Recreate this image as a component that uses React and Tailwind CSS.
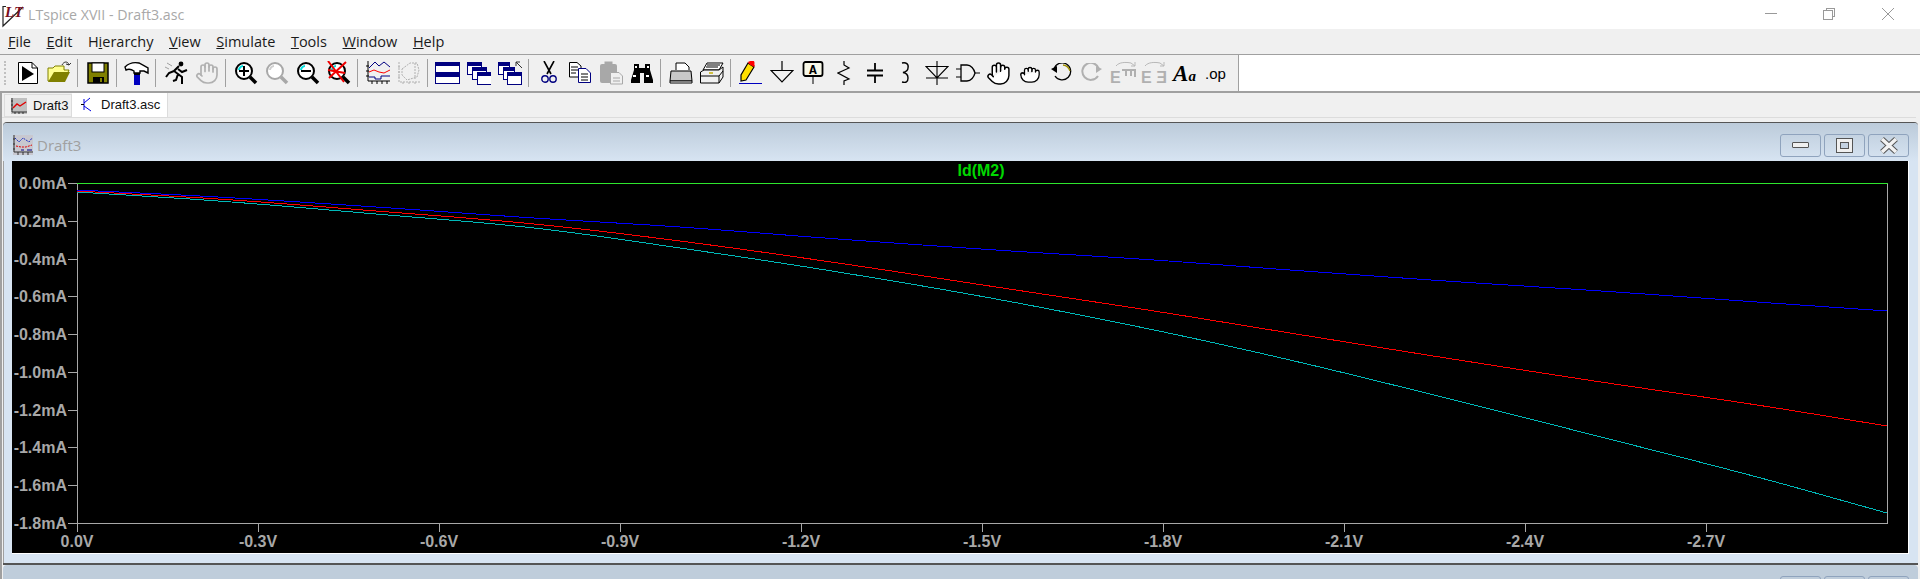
import React from 'react';
import { Hand, Grab } from 'lucide-react';

const menus = [
  ['F', 'ile', ''],
  ['E', 'dit', ''],
  ['H', 'ierarchy', 'i'],
  ['V', 'iew', ''],
  ['S', 'imulate', ''],
  ['T', 'ools', ''],
  ['W', 'indow', ''],
  ['H', 'elp', ''],
];

const yLabels = ['0.0mA', '-0.2mA', '-0.4mA', '-0.6mA', '-0.8mA', '-1.0mA', '-1.2mA', '-1.4mA', '-1.6mA', '-1.8mA'];
const xLabels = ['0.0V', '-0.3V', '-0.6V', '-0.9V', '-1.2V', '-1.5V', '-1.8V', '-2.1V', '-2.4V', '-2.7V'];

const blue = [[77, 190], [218, 197], [376, 207], [534, 218], [680, 227], [838, 239], [996, 250], [1154, 260], [1290, 270], [1446, 281], [1601, 291], [1757, 302], [1887, 311]];
const red = [[77, 191], [218, 199], [376, 211], [534, 224], [680, 241], [838, 263], [996, 287], [1154, 311], [1290, 333], [1446, 358], [1601, 382], [1757, 405], [1887, 426]];
const teal = [[77, 192], [218, 201], [376, 214], [534, 228], [680, 248], [838, 272], [996, 299], [1154, 330], [1290, 360], [1446, 398], [1601, 437], [1757, 477], [1887, 513]];

// hermite through the samples so the traces have no visible corners
const smooth = (pts) => {
  const slope = (i) => {
    const a = pts[Math.max(i - 1, 0)];
    const b = pts[Math.min(i + 1, pts.length - 1)];
    return (b[1] - a[1]) / (b[0] - a[0]);
  };
  const out = [];
  for (let i = 0; i < pts.length - 1; i++) {
    const [x0, y0] = pts[i];
    const [x1, y1] = pts[i + 1];
    const dx = x1 - x0;
    const m0 = slope(i) * dx;
    const m1 = slope(i + 1) * dx;
    for (let s = 0; s < 12; s++) {
      const t = s / 12;
      const t2 = t * t;
      const t3 = t2 * t;
      const y = (2 * t3 - 3 * t2 + 1) * y0 + (t3 - 2 * t2 + t) * m0 + (-2 * t3 + 3 * t2) * y1 + (t3 - t2) * m1;
      out.push(`${x0 + dx * t},${y}`);
    }
  }
  out.push(pts[pts.length - 1].join(','));
  return out.join(' ');
};

const Ico = ({ children, w = 24, h = 24 }) => (
  <svg width={w} height={h} viewBox={`0 0 ${w} ${h}`} fill="none" className="block">
    {children}
  </svg>
);

const Btn = ({ children }) => (
  <div className="w-[31px] h-full flex items-center justify-center shrink-0">{children}</div>
);

const Sep = () => (
  <div className="w-[8px] h-full shrink-0 pl-[3px] py-[4px]">
    <div className="w-px h-full bg-[#a0a0a0]"></div>
  </div>
);

const Magnifier = ({ color = '#000', lens = '#00e0e0', handle = '#000', children }) => (
  <Ico>
    <path d="M16 16L22 22" stroke={handle} strokeWidth="3.5" />
    <circle cx="10" cy="10" r="8" fill="#fff" stroke={color} strokeWidth="2" />
    <path d="M5 9C5 7 7 5 9 5" stroke={lens} strokeWidth="2" />
    {children}
  </Ico>
);

const MiniChart = ({ gray }) => (
  <Ico>
    {gray ? (
      <g stroke="#b0b0b0" strokeDasharray="2 1">
        <path d="M2 1V21H24M1 6H4M1 11H4M1 16H4M6 21V24M12 21V24M18 21V24" />
        <path d="M5 8L13 2H20L22 9L20 16L10 19L5 14Z" />
        <path d="M18 2V18" />
      </g>
    ) : (
      <g>
        <path d="M2 0V20H24M0 5H3M0 10H3M0 15H3M6 20V23M11 20V23M16 20V23M21 20V23" stroke="#000" />
        <path d="M3 7L9 1L13 5L18 1L24 6" stroke="#000080" />
        <path d="M3 11L8 9L13 11L18 12L24 9" stroke="#ff0000" />
        <path d="M3 16H9V18H15V15H24" stroke="#000080" />
      </g>
    )}
  </Ico>
);

const Win = ({ x, y, w = 14, h = 12 }) => (
  <g>
    <rect x={x + 0.5} y={y + 0.5} width={w} height={h} fill="#fff" stroke="#000080" />
    <rect x={x} y={y} width={w + 1} height="4" fill="#000080" />
  </g>
);

function Toolbar() {
  return (
    <div className="flex h-[39px] border-t border-b-2 border-[#a0a0a0] bg-white shrink-0">
      <div className="flex h-full bg-[#f0f0f0] w-[1239px] shrink-0 border-r border-[#a0a0a0]">
        <div className="w-[12px] pl-[4px] py-[6px] shrink-0">
          <div className="w-[2px] h-full border-l-2 border-dotted border-[#c0c0c0]"></div>
        </div>
        {/* run document */}
        <Btn>
          <Ico>
            <path d="M2.5 1.5H16L21.5 7V22.5H2.5Z" fill="#fff" stroke="#000" />
            <path d="M16 1.5V7H21.5" stroke="#000" />
            <path d="M6 5L18 13L6 20Z" fill="#000" />
          </Ico>
        </Btn>
        <Btn>
          <Ico>
            <path d="M1 20V7H6L8 5H17V9H22L17 20Z" fill="#ffff90" stroke="#808000" />
            <path d="M1 21L7 11H23L18 21Z" fill="#808000" />
            <path d="M15 4C17 0 21 0 22 4M22 4L24 2M22 4L19 3" stroke="#333" />
          </Ico>
        </Btn>
        <Sep />
        <Btn>
          <Ico w={22} h={22}>
            <rect x="1" y="1" width="20" height="20" fill="#808000" stroke="#000" strokeWidth="1.5" />
            <rect x="5" y="1" width="12" height="9" fill="#fff" stroke="#000" />
            <rect x="6" y="15" width="11" height="6" fill="#000" />
            <rect x="13" y="16" width="2" height="4" fill="#808000" />
          </Ico>
        </Btn>
        <Sep />
        <Btn>
          <Ico w={26} h={24}>
            <path d="M1 6C5 2 10 1 15 2L24 7L24 12L20 10H16V12H10V10C7 8 4 8 2 9Z" fill="#fff" stroke="#000" strokeWidth="1.4" />
            <rect x="10" y="12" width="6" height="4" fill="#000" />
            <rect x="10" y="14" width="6" height="10" fill="#0000c0" />
          </Ico>
        </Btn>
        <Sep />
        <Btn>
          <Ico>
            <circle cx="17" cy="3" r="2.4" fill="#000" />
            <path d="M15 5L10 10L14 13L12 19L9 20M10 10L5 12L2 16M14 8L18 11L23 9M14 13L18 16L18 23" stroke="#000" strokeWidth="2" />
            <path d="M3 2L8 5M1 6L5 8" stroke="#a0a0a0" />
          </Ico>
        </Btn>
        <Btn>
          <Hand size={24} color="#b0b0b0" strokeWidth={1.7} />
        </Btn>
        <Sep />
        <Btn>
          <Magnifier>
            <path d="M10 5V15M5 10H15" stroke="#000" strokeWidth="2" />
          </Magnifier>
        </Btn>
        <Btn>
          <Magnifier color="#a8a8a8" lens="#d0d0d0" handle="#a8a8a8" />
        </Btn>
        <Btn>
          <Magnifier>
            <path d="M5 10H15" stroke="#000" strokeWidth="2" />
          </Magnifier>
        </Btn>
        <Btn>
          <Magnifier>
            <path d="M1 0L17 21M19 1L2 17M1 9L18 12" stroke="#f00000" strokeWidth="2" />
          </Magnifier>
        </Btn>
        <Sep />
        <Btn>
          <MiniChart />
        </Btn>
        <Btn>
          <MiniChart gray />
        </Btn>
        <Sep />
        <Btn>
          <Ico w={25} h={22}>
            <rect x="0.5" y="0.5" width="24" height="10" fill="#fff" stroke="#000080" />
            <rect x="0" y="0" width="25" height="4" fill="#000080" />
            <rect x="0.5" y="11.5" width="24" height="10" fill="#fff" stroke="#000080" />
            <rect x="0" y="11" width="25" height="4" fill="#000080" />
          </Ico>
        </Btn>
        <Btn>
          <Ico>
            <Win x={0} y={1} />
            <Win x={5} y={6} />
            <Win x={10} y={11} />
          </Ico>
        </Btn>
        <Btn>
          <Ico>
            <Win x={0} y={1} w={11} />
            <Win x={5} y={6} w={11} />
            <Win x={9} y={11} />
            <path d="M18 1H22M18 1V5M18 1L24 7" stroke="#333" />
          </Ico>
        </Btn>
        <Sep />
        <Btn>
          <Ico w={16} h={24}>
            <path d="M3 0L10 13M13 0L6 13" stroke="#000" strokeWidth="1.6" />
            <circle cx="4" cy="18" r="3.2" stroke="#000080" strokeWidth="1.4" />
            <circle cx="12" cy="18" r="3.2" stroke="#000080" strokeWidth="1.4" />
          </Ico>
        </Btn>
        <Btn>
          <Ico>
            <path d="M1.5 1.5H9L13 5V16H1.5Z" fill="#fff" stroke="#000" />
            <path d="M3 6H10M3 9H10M3 12H8" stroke="#000" />
            <path d="M10.5 7.5H18L22.5 12V21.5H10.5Z" fill="#fff" stroke="#000080" />
            <path d="M13 13H20M13 16H20M13 19H20" stroke="#000" />
          </Ico>
        </Btn>
        <Btn>
          <Ico>
            <rect x="1" y="3" width="17" height="19" rx="2" fill="#a8a8a8" />
            <rect x="6" y="1" width="7" height="3" fill="#a8a8a8" stroke="#a8a8a8" />
            <path d="M11.5 11.5H20L23.5 15V23H11.5Z" fill="#f0f0f0" stroke="#a8a8a8" />
            <path d="M14 17H21M14 20H21" stroke="#a8a8a8" />
          </Ico>
        </Btn>
        <Btn>
          <Ico>
            <path d="M4 3H9V7H15V3H20V9L23 19V22H14V12H10V22H1V19L4 9Z" fill="#000" />
            <rect x="5" y="5" width="2" height="2" fill="#fff" />
            <rect x="17" y="5" width="2" height="2" fill="#fff" />
            <rect x="3" y="14" width="3" height="2" fill="#fff" />
            <rect x="16" y="14" width="3" height="2" fill="#fff" />
          </Ico>
        </Btn>
        <Sep />
        <Btn>
          <Ico>
            <path d="M7 9V2H16L20 6V9" fill="#fff" stroke="#000" />
            <path d="M2 10H22L23 20H1Z" fill="#c8c8c8" stroke="#000" />
            <path d="M1 20H23V22H1Z" fill="#fff" stroke="#000" />
          </Ico>
        </Btn>
        <Btn>
          <Ico w={25} h={24}>
            <path d="M8 2H24L20 9H4Z" fill="#fff" stroke="#000" />
            <path d="M8 4H21M7 6H19" stroke="#000" />
            <path d="M1.5 11L5 9H20L24 6V16L20 22H1.5Z" fill="#f0f0f0" stroke="#000" />
            <path d="M1.5 15H20V22M20 15L24 10" stroke="#000" />
            <path d="M10 12H14" stroke="#d0c040" strokeWidth="2" />
          </Ico>
        </Btn>
        <Sep />
        <Btn>
          <Ico>
            <path d="M9 2L15 6L7 19L2 20L2 14Z" fill="#ffe000" stroke="#000" strokeWidth="1.2" />
            <path d="M10 0L16 4L15 6L9 2Z" fill="#ff0000" />
            <circle cx="13" cy="2" r="2.5" fill="#ff0000" />
            <path d="M0 22.5H23" stroke="#0000c0" />
          </Ico>
        </Btn>
        <Btn>
          <Ico>
            <path d="M12 0V9M1 9.5H23L12 21Z" stroke="#000" strokeWidth="1.2" />
          </Ico>
        </Btn>
        <Btn>
          <Ico w={22} h={24}>
            <rect x="1.5" y="1" width="19" height="14" rx="2" fill="#f8f8e8" stroke="#000" strokeWidth="1.8" />
            <path d="M11 15V23" stroke="#000" />
            <text x="11" y="13" textAnchor="middle" fontFamily="'Liberation Mono', monospace" fontWeight="700" fontSize="13" fill="#000">A</text>
          </Ico>
        </Btn>
        <Btn>
          <Ico w={14} h={24}>
            <path d="M7 0V4L12 7L1 12L12 18L7 20V24" stroke="#000" strokeWidth="1.2" />
          </Ico>
        </Btn>
        <Btn>
          <Ico w={18} h={24}>
            <path d="M9 2V9M1 9.5H17M1 14.5H17M9 15V22" stroke="#000" strokeWidth="1.8" />
          </Ico>
        </Btn>
        <Btn>
          <Ico w={12} h={24}>
            <path d="M2 2C6 1 9 3 8 7C8 10 5 11 3 11.5C6 12 8 14 8 17C8 21 6 22 2 21" stroke="#000" strokeWidth="1.4" />
          </Ico>
        </Btn>
        <Btn>
          <Ico>
            <path d="M12 0V24M1 17H23M1 5.5H23L12 17Z" stroke="#000" strokeWidth="1.1" />
          </Ico>
        </Btn>
        <Btn>
          <Ico>
            <path d="M0 8H5M0 16H5M19 12H24" stroke="#000" strokeWidth="1.2" />
            <path d="M5 4H11C15 4 18 8 19 12C18 16 15 20 11 20H5Z" fill="#f0f0f0" stroke="#000" strokeWidth="1.3" />
          </Ico>
        </Btn>
        <Btn>
          <Hand size={25} color="#000" fill="#fff" strokeWidth={1.4} />
        </Btn>
        <Btn>
          <Grab size={22} color="#000" fill="#fff" strokeWidth={1.4} />
        </Btn>
        <Btn>
          <Ico w={22} h={20}>
            <path d="M5 13A8.5 8.5 0 1 0 4 6" stroke="#000" strokeWidth="1.3" />
            <path d="M13 2A8.5 8.5 0 0 1 20 8" stroke="#a09000" strokeWidth="1.3" />
            <path d="M1 6L7 3V10Z" fill="#000" />
          </Ico>
        </Btn>
        <Btn>
          <Ico w={22} h={20}>
            <path d="M17 13A8.5 8.5 0 1 1 18 6" stroke="#b0b0b0" strokeWidth="2" />
            <path d="M21 6L15 3V10Z" fill="#b0b0b0" />
          </Ico>
        </Btn>
        <Btn>
          <Ico w={26} h={24}>
            <path d="M6 5C9 1 16 1 21 2L25 5M25 5V1M25 5H21" stroke="#b8b8b8" />
            <text x="0" y="22" fontFamily="'Liberation Sans', sans-serif" fontWeight="700" fontSize="16" fill="#b0b0b0">E</text>
            <path d="M12 9H25V16M16 9V15M21 9V15" stroke="#b0b0b0" strokeWidth="2" />
          </Ico>
        </Btn>
        <Btn>
          <Ico w={26} h={24}>
            <path d="M4 5C7 1 14 1 19 2L23 5M23 5V1M23 5H19" stroke="#b8b8b8" />
            <text x="0" y="22" fontFamily="'Liberation Sans', sans-serif" fontWeight="700" fontSize="16" fill="#b0b0b0">E</text>
            <text x="0" y="22" transform="translate(26 0) scale(-1 1)" fontFamily="'Liberation Sans', sans-serif" fontWeight="700" fontSize="16" fill="#b0b0b0">E</text>
          </Ico>
        </Btn>
        <Btn>
          <span className="font-['Liberation_Serif',serif] font-bold italic text-[23px] leading-none text-black">A<span className="text-[15px]">a</span></span>
        </Btn>
        <Btn>
          <span className="font-['Liberation_Sans',sans-serif] text-[15px] leading-none text-black">.op</span>
        </Btn>
      </div>
    </div>
  );
}

const TitleBtn = ({ children }) => (
  <div className="w-[41px] h-[23px] rounded-[3px] border border-[#8fa3bd] flex items-center justify-center">{children}</div>
);

function Plot() {
  return (
    <svg width="1896" height="392" viewBox="12 161 1896 392" className="block bg-black" fontFamily="'Liberation Sans', Arial, sans-serif" fontWeight="700" fontSize="16">
      <g shapeRendering="crispEdges" fill="none">
        <path d="M77.5 183.5H1887.5V523.5H77.5Z" stroke="#a8a8a8" />
        <path d="M77 183.5H1887.5" stroke="#2ee62e" />
        {yLabels.map((_, i) => {
          const y = 183.5 + Math.round((i * 340) / 9);
          return <path key={i} d={`M68 ${y}H77`} stroke="#a8a8a8" />;
        })}
        {xLabels.map((_, i) => {
          const x = 77.5 + Math.round(i * 181);
          return <path key={i} d={`M${x} 523V532`} stroke="#a8a8a8" />;
        })}
        <polyline points={smooth(teal)} stroke="#00b8b8" />
        <polyline points={smooth(red)} stroke="#ff0000" />
        <polyline points={smooth(blue)} stroke="#0000ff" />
      </g>
      <text x="981" y="176" textAnchor="middle" fill="#00d800">Id(M2)</text>
      {yLabels.map((label, i) => (
        <text key={label} x="67" y={189 + (i * 340) / 9} textAnchor="end" fill="#a8a8a8">{label}</text>
      ))}
      {xLabels.map((label, i) => (
        <text key={label} x={77 + i * 181} y="547" textAnchor="middle" fill="#a8a8a8">{label}</text>
      ))}
    </svg>
  );
}

export default function App() {
  return (
    <div className="w-[1920px] h-[579px] overflow-hidden flex flex-col bg-[#f0f0f0] font-['Open_Sans',sans-serif]">
      {/* title bar */}
      <div className="h-[29px] bg-white flex items-center shrink-0">
        <svg width="24" height="26" viewBox="0 0 24 26" className="ml-[2px] mt-[1px]">
          <path d="M1 4V24L21 5" fill="none" stroke="#222" strokeWidth="1.2" />
          <path d="M1 4.5H4" stroke="#222" />
          <text x="3" y="15" fontFamily="'Liberation Serif', serif" fontWeight="700" fontStyle="italic" fontSize="15" fill="#7a0f1e">LT</text>
        </svg>
        <span className="ml-[2px] text-[14.2px] text-[#a8a8a8]">LTspice XVII - Draft3.asc</span>
        <div className="ml-auto flex items-center h-full">
          <svg width="156" height="29" viewBox="1764 0 156 29" fill="none" stroke="#999" shapeRendering="crispEdges">
            <path d="M1765 13.5H1777" />
            <path d="M1823.5 10.5H1832.5V19.5H1823.5Z" />
            <path d="M1826.5 10V8.5H1834.5V16.5H1833" />
            <path d="M1882 8L1894 20M1894 8L1882 20" shapeRendering="auto" />
          </svg>
        </div>
      </div>

      {/* menu */}
      <div className="h-[25px] flex items-center pl-[8px] text-[14.5px] text-[#1a1a1a] shrink-0">
        {menus.map(([a, b, under], i) => (
          <span key={i} className="mr-[15.6px]">
            {under ? (
              <>
                {a}
                <span className="underline">{under}</span>
                {b.slice(1)}
              </>
            ) : (
              <>
                <span className="underline">{a}</span>
                {b}
              </>
            )}
          </span>
        ))}
      </div>

      <Toolbar />

      {/* tabs */}
      <div className="h-[25px] flex items-end pl-[4px] shrink-0 font-['Liberation_Sans',sans-serif] text-[13px] text-[#111] border-b border-[#dcdcdc] mr-[4px]">
        <div className="w-[68px] h-[23px] bg-[#f0f0f0] border border-[#dcdcdc] flex items-center pl-[6px] gap-[6px]">
          <svg width="16" height="16" viewBox="0 0 16 16" fill="none" className="shrink-0">
            <rect width="16" height="16" fill="#c0c0c0" />
            <path d="M1 0V14H16M0 3H2M0 7H2M0 11H2M4 14V16M8 14V16M12 14V16" stroke="#333" />
            <path d="M2 10L6 6L9 8L15 4" stroke="#e00000" strokeWidth="1.4" />
          </svg>
          <span>Draft3</span>
        </div>
        <div className="w-[96px] h-[24px] bg-white flex items-center pl-[9px] gap-[8px] border-r border-[#dcdcdc]">
          <svg width="12" height="16" viewBox="0 0 12 16" fill="none" stroke="#0000e0" className="shrink-0">
            <path d="M3 2V13M3 6L9 1M3 9L10 14" />
            <path d="M0 7.5H3" stroke="#000" />
          </svg>
          <span>Draft3.asc</span>
        </div>
      </div>

      {/* mdi area */}
      <div className="flex-1 min-h-0 flex pt-[4px]">
        <div className="w-[2px] bg-[#a0a0a0] shrink-0 -mt-[30px]"></div>
        <div className="ml-px w-[1915px] flex flex-col min-h-0">
          <div className="bg-[#d7e4f2] border-t border-[#555] rounded-tl-[4px] rounded-tr-[4px] shadow-[inset_1px_0_0_#a0a0a0]">
            <div className="h-[38px] bg-gradient-to-b from-[#bccbda] to-[#d7e4f2] flex items-center pt-[6px] pl-[10px] pr-[9px] rounded-t-[4px]">
              <svg width="20" height="20" viewBox="0 0 20 20" fill="none" className="shrink-0">
                <rect width="20" height="20" fill="#c8c8d0" />
                <path d="M1 0V17H20M0 4H2M0 9H2M0 14H2M5 17V20M10 17V20M15 17V20" stroke="#333" />
                <path d="M2 3L6 7L10 3L16 7L19 3" stroke="#2030c0" strokeDasharray="2 1" />
                <path d="M3 11L8 12L13 12L19 10" stroke="#e00000" strokeDasharray="2 1" />
                <path d="M8 15H11M14 15H19" stroke="#000080" />
              </svg>
              <span className="ml-[4px] text-[15px] text-[#a0a0a0]">Draft3</span>
              <div className="ml-auto flex gap-[3px]">
                <TitleBtn>
                  <div className="w-[17px] h-[6px] rounded-[1px] bg-[#f0f0f0] border border-[#555]"></div>
                </TitleBtn>
                <TitleBtn>
                  <div className="w-[17px] h-[15px] bg-[#f0f0f0] border border-[#555] flex items-center justify-center">
                    <div className="w-[9px] h-[7px] bg-[#c4d2e2] border border-[#555]"></div>
                  </div>
                </TitleBtn>
                <TitleBtn>
                  <svg width="20" height="17" viewBox="0 0 20 17">
                    <path d="M3 2L17 15M17 2L3 15" stroke="#555" strokeWidth="5.5" />
                    <path d="M3 2L17 15M17 2L3 15" stroke="#f2f2f2" strokeWidth="3.5" />
                  </svg>
                </TitleBtn>
              </div>
            </div>
            <div className="px-[9px]">
              <div className="w-[1897px] border-r border-b border-white">
                <Plot />
              </div>
            </div>
            <div className="h-[9px]"></div>
          </div>
          <div className="h-[2px] bg-[#555] shrink-0"></div>

          {/* second window, cut off by the bottom of the screen */}
          <div className="flex-1 bg-[#bfcddb] flex justify-end pt-[11px] pr-[9px] gap-[3px] rounded-t-[4px]">
            <TitleBtn />
            <TitleBtn />
            <TitleBtn />
          </div>
        </div>
      </div>
    </div>
  );
}
